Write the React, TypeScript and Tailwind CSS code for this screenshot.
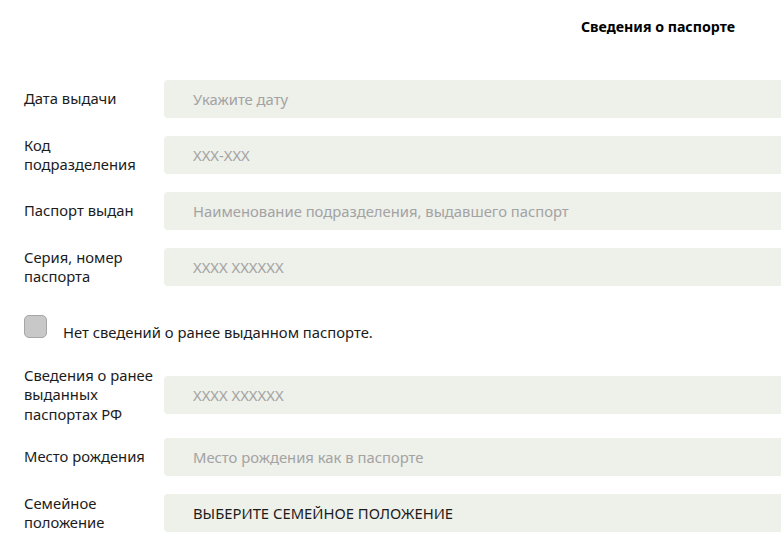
const font = { fontFamily: '"Noto Sans", "Open Sans", Arial, sans-serif' };

type Row = { label: string; placeholder: string; mt: string; value?: boolean };

const rowsTop: Row[] = [
  { label: "Дата выдачи", placeholder: "Укажите дату", mt: "mt-[44px]" },
  { label: "Код подразделения", placeholder: "XXX-XXX", mt: "mt-[18px]" },
  { label: "Паспорт выдан", placeholder: "Наименование подразделения, выдавшего паспорт", mt: "mt-[18px]" },
  { label: "Серия, номер паспорта", placeholder: "XXXX XXXXXX", mt: "mt-[18px]" },
];

const rowsBottom: Row[] = [
  { label: "Сведения о ранее выданных паспортах РФ", placeholder: "XXXX XXXXXX", mt: "mt-[34px]" },
  { label: "Место рождения", placeholder: "Место рождения как в паспорте", mt: "mt-[24px]" },
  { label: "Семейное положение", placeholder: "ВЫБЕРИТЕ СЕМЕЙНОЕ ПОЛОЖЕНИЕ", mt: "mt-[18px]", value: true },
];

const FieldRow = ({ row }: { row: Row }) => (
  <div className={`flex h-[38px] items-center ${row.mt}`}>
    <div className="w-[140px] shrink-0 pr-2 text-[14.8px] leading-[19.5px] text-[#1c1c1c]">{row.label}</div>
    <div className="flex h-[38px] w-[660px] shrink-0 items-center rounded-[4px] bg-[#eef0ea] pl-[29px] text-[14.8px]">
      <span className={row.value ? "text-[#1c1c1c]" : "text-[#a3a3a3]"}>{row.placeholder}</span>
    </div>
  </div>
);

export default function App() {
  return (
    <div className="h-[555px] w-[781px] overflow-hidden bg-white" style={font}>
      <div className="pl-[24px] pt-[17px]">
        <div className="flex justify-end pr-[46px] text-[14.2px] font-bold leading-[19px] text-black">
          Сведения о паспорте
        </div>
        {rowsTop.map((r) => (
          <FieldRow key={r.label} row={r} />
        ))}
        <div className="mt-[29px] flex items-start">
          <div className="h-[23px] w-[23px] shrink-0 rounded-[5px] border border-[#a6a6a6] bg-[#c8c8c8]" />
          <span className="ml-[16px] mt-[7px] text-[14.8px] leading-[20px] text-[#1c1c1c]">
            Нет сведений о ранее выданном паспорте.
          </span>
        </div>
        {rowsBottom.map((r) => (
          <FieldRow key={r.label} row={r} />
        ))}
      </div>
    </div>
  );
}
